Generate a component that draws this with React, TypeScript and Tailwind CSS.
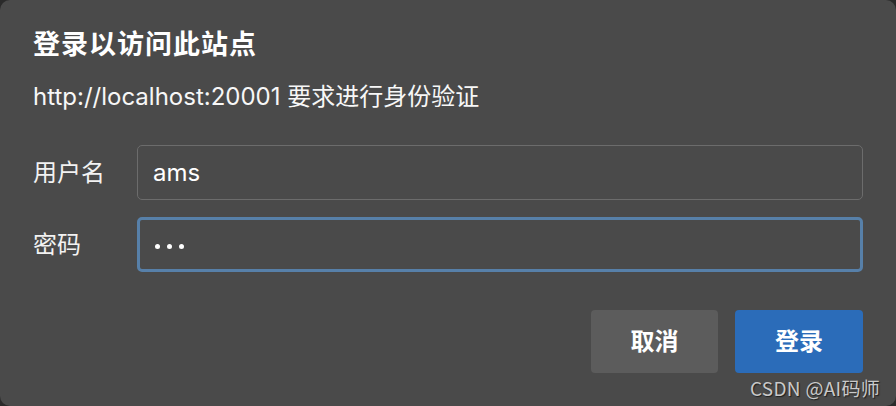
import React from "react";

const font = "font-['Inter','Noto_Sans_CJK_SC',sans-serif]";

function Field({ label, focused, children }: { label: string; focused?: boolean; children: React.ReactNode }) {
  return (
    <div className="flex items-center">
      <label className="w-[104px] text-[24px] leading-[24px] text-[#f2f2f2]">{label}</label>
      <div
        className={`flex h-[55px] flex-1 items-center rounded-[5px] ${
          focused ? "border-[3px] border-[#5780a9] pl-[15px]" : "border border-[#6c6c6c] pl-[15px]"
        }`}
      >
        {children}
      </div>
    </div>
  );
}

export default function App() {
  return (
    <div className={`relative h-[406px] w-[896px] overflow-hidden bg-[#2a2a2a] ${font}`}>
      <div className="h-full w-full rounded-[10px] bg-[#4a4a4a] px-[33px] pt-[31px]">
        <h1 className="text-[27px] leading-[28px] font-bold tracking-[1px] text-white">登录以访问此站点</h1>
        <p className="mt-[26px] text-[24px] leading-[24px] text-[#f7f7f7]">
          http://localhost:20001 要求进行身份验证
        </p>

        <div className="mt-[36px] flex flex-col gap-[17px]">
          <Field label="用户名">
            <span className="text-[24px] leading-[24px] text-white">ams</span>
          </Field>
          <Field label="密码" focused>
            <div className="mt-[4px] flex gap-[7px]">
              <span className="h-[5px] w-[5px] rounded-full bg-white" />
              <span className="h-[5px] w-[5px] rounded-full bg-white" />
              <span className="h-[5px] w-[5px] rounded-full bg-white" />
            </div>
          </Field>
        </div>

        <div className="mt-[38px] flex justify-end gap-[17px]">
          <button
            type="button"
            className="h-[63px] w-[127px] rounded-[4px] bg-[#5c5c5c] text-[24px] font-bold text-white"
          >
            取消
          </button>
          <button
            type="button"
            className="h-[63px] w-[128px] rounded-[4px] bg-[#2b6cb9] text-[24px] font-bold text-white"
          >
            登录
          </button>
        </div>
      </div>

      <span className="absolute right-[16px] bottom-[8px] font-['Noto_Sans_CJK_SC',sans-serif] text-[19px] leading-[20px] tracking-[0.3px] text-[#c9c9c9] [text-shadow:1px_1px_1px_#1e1e1e]">
        CSDN @AI码师
      </span>
    </div>
  );
}
